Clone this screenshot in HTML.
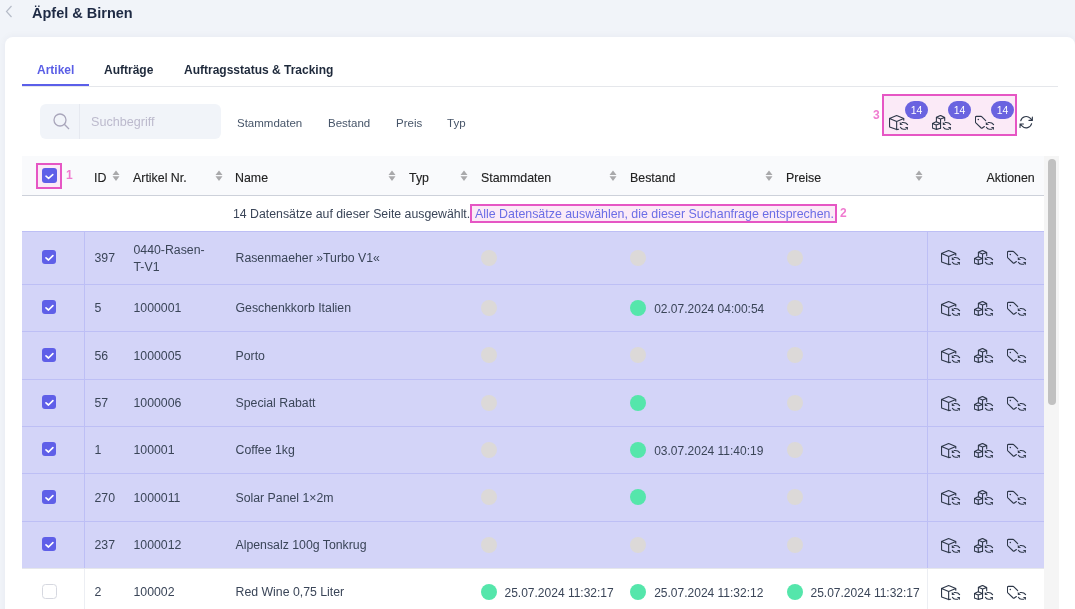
<!DOCTYPE html>
<html><head><meta charset="utf-8">
<style>
*{box-sizing:border-box;margin:0;padding:0}
html,body{width:1075px;height:609px;overflow:hidden;background:#f1f4f9;font-family:"Liberation Sans",sans-serif;color:#334155}
body{will-change:transform}
.a{position:absolute;white-space:nowrap}
#title{left:32px;top:3.6px;font-size:14.5px;font-weight:700;color:#1e2a44;line-height:18px}
#back{left:5px;top:5px}
#card{position:absolute;left:5px;top:37px;width:1070px;height:600px;background:#fff;border-radius:8px;box-shadow:0 0 8px rgba(30,40,70,0.05)}
.tab{top:63px;font-size:12px;font-weight:700;color:#1e293b;line-height:14px}
#tabline{left:22px;top:86px;width:1036px;height:1px;background:#e5e7eb}
#tabul{left:22px;top:84px;width:67px;height:2px;background:#5b5fe9}
#search{left:40px;top:104px;width:181px;height:35px;background:#f1f4f9;border-radius:6px}
#search .div{position:absolute;left:39px;top:0;width:1px;height:35px;background:#e6e9f0}
#search .ph{position:absolute;left:51px;top:11px;font-size:12.6px;color:#bcbacd;line-height:14px}
.flt{top:116px;font-size:11.5px;color:#475569;line-height:14px}
.pink{position:absolute;border:2px solid #e656c4;background:#fbeaf7}
.plab{position:absolute;font-size:12px;font-weight:700;color:#f07bd0;line-height:12px}
.badge{position:absolute;width:23px;height:18px;border-radius:9px;background:#6a63e0;color:#fff;font-size:10.5px;line-height:18px;text-align:center}
#thead{left:22px;top:156px;width:1022px;height:40px;background:#f9fafc;border-bottom:1px solid #cdd1da}
.th{top:171px;font-size:12.4px;color:#222;line-height:14px;-webkit-text-stroke:0.12px #222}
.sort{position:absolute;top:170px}
#info{left:22px;top:196px;width:1022px;height:35px;background:#fff}
.row{position:absolute;left:22px;width:1022px;background:#d3d4f8;border-top:1px solid #bdbff5}
.row.w{background:#fff;border-top-color:#e5e7eb}
.vb{position:absolute;top:0;bottom:0;width:1px;background:#bdbff5}
.row.w .vb{background:#eceef3}
.td{position:absolute;font-size:12.3px;color:#3a4558;line-height:17px}
.cb{position:absolute;left:20px;width:14.4px;height:14.4px;border-radius:3px;background:#5f5fe8}
.cb.off{background:#fff;border:1px solid #d6d8e0;width:14.7px;height:15.4px;margin-top:-0.5px;border-radius:3.5px}
.dot{position:absolute;width:16px;height:16px;border-radius:8px;background:#dcd9d8}
.dot.g{background:#55e6ab}
.ico{position:absolute}
.dt{font-size:12px;margin-top:0.8px}
#sb{left:1044px;top:156px;width:15px;height:460px;background:#f5f5f5}
#thumb{left:1048px;top:159px;width:8px;height:246px;border-radius:4px;background:#c1c1c1}
</style></head><body>
<svg class="a" id="back" width="8" height="13" viewBox="0 0 8 13"><path d="M6.5 1 L1.5 6.5 L6.5 12" fill="none" stroke="#b6bcc8" stroke-width="1.2"/></svg>
<div class="a" id="title">Äpfel &amp; Birnen</div>
<div id="card"></div>
<div class="a tab" style="left:37px;color:#5a5ee6">Artikel</div>
<div class="a tab" style="left:104px">Aufträge</div>
<div class="a tab" style="left:184px">Auftragsstatus &amp; Tracking</div>
<div class="a" id="tabline"></div>
<div class="a" id="tabul"></div>

<div class="a" id="search"><div class="div"></div>
<svg style="position:absolute;left:12px;top:8px" width="19" height="19" viewBox="0 0 19 19"><circle cx="8" cy="8" r="6" fill="none" stroke="#a9a6bb" stroke-width="1.3"/><path d="M12.3 12.3 L17 17" stroke="#a9a6bb" stroke-width="1.3"/></svg>
<div class="ph">Suchbegriff</div></div>
<div class="a flt" style="left:237px">Stammdaten</div>
<div class="a flt" style="left:328px">Bestand</div>
<div class="a flt" style="left:396px">Preis</div>
<div class="a flt" style="left:447px">Typ</div>

<div class="pink" style="left:882px;top:94px;width:135px;height:42px"></div>
<div class="plab" style="left:873px;top:109px">3</div>
<div class="badge" style="left:905px;top:101px">14</div>
<div class="badge" style="left:948px;top:101px">14</div>
<div class="badge" style="left:991px;top:101px">14</div>
<svg class="ico a" style="left:889px;top:114.7px" width="21" height="17" viewBox="0 0 21 17"><g fill="none" stroke="#2d3748" stroke-width="1.1" stroke-linejoin="round" stroke-linecap="round"><path d="M7.65 0.5 L0.5 3.4 L0.6 11.9 L7.65 14.6 L7.65 6.5 L0.5 3.4 M7.65 0.5 L14.8 3.5 L7.65 6.5 M14.8 3.5 L14.8 5.3 M7.65 14.6 L9.6 14.2"/></g><path d="M13 7.5 C15.5 7.2 17.4 7.8 18.6 9.6 M11.4 12.3 C12.2 13.8 13 14.3 14.6 14.3 L16.8 14.3" fill="none" stroke="#2d3748" stroke-width="1.1" stroke-linecap="round"/><path d="M10.8 6.9 L10.8 10 L14 9.7 Z M15.9 12.1 L18.9 12.1 L18.9 15.1 Z" fill="#2d3748"/></svg><svg class="ico a" style="left:931.7px;top:114.7px" width="21" height="17" viewBox="0 0 21 17"><g fill="none" stroke="#2d3748" stroke-width="1.1" stroke-linejoin="round" stroke-linecap="round"><path d="M8.55 0.4 L4.4 2.3 L4.4 6.8 M8.55 0.4 L12.7 2.5 L12.7 5.8 M4.4 2.3 L8.55 4.1 L12.7 2.5 M8.55 4.1 L8.55 13.3"/><path d="M4.2 6.8 L0.4 8.45 L0.4 13 L4.55 14.4 L8.55 13.3 M0.4 8.45 L4.2 9.9 L8.55 8.45 L4.2 6.8 M4.2 9.9 L4.4 14.4"/></g><path d="M13 7.5 C15.5 7.2 17.4 7.8 18.6 9.6 M11.4 12.3 C12.2 13.8 13 14.3 14.6 14.3 L16.8 14.3" fill="none" stroke="#2d3748" stroke-width="1.1" stroke-linecap="round"/><path d="M10.8 6.9 L10.8 10 L14 9.7 Z M15.9 12.1 L18.9 12.1 L18.9 15.1 Z" fill="#2d3748"/></svg><svg class="ico a" style="left:975.3px;top:114.7px" width="21" height="17" viewBox="0 0 21 17"><g fill="none" stroke="#2d3748" stroke-width="1.1" stroke-linejoin="round" stroke-linecap="round"><path d="M10.7 5.6 L6.9 1.8 Q6.5 1.4 6 1.4 L1.4 1.4 Q0.45 1.4 0.45 2.4 L0.45 7 Q0.45 7.5 0.85 7.9 L6.2 13 Q6.75 13.5 7.3 13 L9.4 11.5"/></g><circle cx="3.3" cy="4.5" r="0.75" fill="#2d3748"/><path d="M13 7.5 C15.5 7.2 17.4 7.8 18.6 9.6 M11.4 12.3 C12.2 13.8 13 14.3 14.6 14.3 L16.8 14.3" fill="none" stroke="#2d3748" stroke-width="1.1" stroke-linecap="round"/><path d="M10.8 6.9 L10.8 10 L14 9.7 Z M15.9 12.1 L18.9 12.1 L18.9 15.1 Z" fill="#2d3748"/></svg>
<svg class="a" style="left:1017.9px;top:114.4px" width="16.4" height="16.4" viewBox="0 0 24 24"><path d="M16.023 9.348h4.992v-.001M2.985 19.644v-4.992m0 0h4.992m-4.993 0 3.181 3.183a8.25 8.25 0 0 0 13.803-3.7M4.031 9.865a8.25 8.25 0 0 1 13.803-3.7l3.181 3.182m0-4.991v4.99" fill="none" stroke="#2d3748" stroke-width="1.6" stroke-linecap="round" stroke-linejoin="round"/></svg>

<div class="a" id="thead"></div>
<div class="pink" style="left:36px;top:163px;width:26px;height:26px"></div>
<div class="cb" style="left:42px;top:168.4px;width:14.7px;height:14.7px"><svg width="15" height="15" viewBox="0 0 15 15" style="position:absolute;left:0;top:0"><path d="M4 8.2 L6.6 10.3 L10.8 6.6" fill="none" stroke="#fff" stroke-width="1.6" stroke-linecap="round" stroke-linejoin="round"/></svg></div>
<div class="plab" style="left:66px;top:169px">1</div>
<div class="a th" style="left:94px">ID</div>
<div class="a th" style="left:133px">Artikel Nr.</div>
<div class="a th" style="left:235px">Name</div>
<div class="a th" style="left:409px">Typ</div>
<div class="a th" style="left:481px">Stammdaten</div>
<div class="a th" style="left:630px">Bestand</div>
<div class="a th" style="left:786px">Preise</div>
<div class="a th" style="left:986.5px">Aktionen</div>

<svg class="sort" style="left:112px" width="8" height="12" viewBox="0 0 8 12"><path d="M0.5 5 L4 0.4 L7.5 5 Z M0.5 6.2 L4 10.9 L7.5 6.2 Z" fill="#a9a9ab"/></svg>
<svg class="sort" style="left:214.5px" width="8" height="12" viewBox="0 0 8 12"><path d="M0.5 5 L4 0.4 L7.5 5 Z M0.5 6.2 L4 10.9 L7.5 6.2 Z" fill="#a9a9ab"/></svg>
<svg class="sort" style="left:388px" width="8" height="12" viewBox="0 0 8 12"><path d="M0.5 5 L4 0.4 L7.5 5 Z M0.5 6.2 L4 10.9 L7.5 6.2 Z" fill="#a9a9ab"/></svg>
<svg class="sort" style="left:460px" width="8" height="12" viewBox="0 0 8 12"><path d="M0.5 5 L4 0.4 L7.5 5 Z M0.5 6.2 L4 10.9 L7.5 6.2 Z" fill="#a9a9ab"/></svg>
<svg class="sort" style="left:609px" width="8" height="12" viewBox="0 0 8 12"><path d="M0.5 5 L4 0.4 L7.5 5 Z M0.5 6.2 L4 10.9 L7.5 6.2 Z" fill="#a9a9ab"/></svg>
<svg class="sort" style="left:765px" width="8" height="12" viewBox="0 0 8 12"><path d="M0.5 5 L4 0.4 L7.5 5 Z M0.5 6.2 L4 10.9 L7.5 6.2 Z" fill="#a9a9ab"/></svg>
<svg class="sort" style="left:915px" width="8" height="12" viewBox="0 0 8 12"><path d="M0.5 5 L4 0.4 L7.5 5 Z M0.5 6.2 L4 10.9 L7.5 6.2 Z" fill="#a9a9ab"/></svg>
<div class="a" id="info"></div>
<div class="a td" style="left:233px;top:206px">14 Datensätze auf dieser Seite ausgewählt.</div>
<div class="pink" style="left:470px;top:204px;width:367px;height:19px"></div>
<div class="a td" style="left:475px;top:206px;color:#6b6de6;font-size:12.4px">Alle Datensätze auswählen, die dieser Suchanfrage entsprechen.</div>
<div class="plab" style="left:840px;top:207px">2</div>

<div class="row" style="top:231px;height:53px"><div class="vb" style="left:62px"></div><div class="vb" style="left:905px"></div><div class="cb" style="left:20px;top:18.1px"><svg width="15" height="15" viewBox="0 0 15 15" style="position:absolute;left:0;top:0"><path d="M4 7.9 L6.5 10 L10.9 5.7" fill="none" stroke="#fff" stroke-width="1.7" stroke-linecap="round" stroke-linejoin="round"/></svg></div><div class="td" style="left:72.5px;top:18.3px">397</div><div class="td" style="left:111.5px;top:9.8px">0440-Rasen-<br>T-V1</div><div class="td" style="left:213.5px;top:18.3px">Rasenmaeher »Turbo V1«</div><div class="dot" style="left:458.5px;top:17.5px"></div><div class="dot" style="left:608.2px;top:17.5px"></div><div class="dot" style="left:764.5px;top:17.5px"></div><svg class="ico" style="left:919px;top:17.8px" width="21" height="17" viewBox="0 0 21 17"><g fill="none" stroke="#2d3748" stroke-width="1.1" stroke-linejoin="round" stroke-linecap="round"><path d="M7.65 0.5 L0.5 3.4 L0.6 11.9 L7.65 14.6 L7.65 6.5 L0.5 3.4 M7.65 0.5 L14.8 3.5 L7.65 6.5 M14.8 3.5 L14.8 5.3 M7.65 14.6 L9.6 14.2"/></g><path d="M13 7.5 C15.5 7.2 17.4 7.8 18.6 9.6 M11.4 12.3 C12.2 13.8 13 14.3 14.6 14.3 L16.8 14.3" fill="none" stroke="#2d3748" stroke-width="1.1" stroke-linecap="round"/><path d="M10.8 6.9 L10.8 10 L14 9.7 Z M15.9 12.1 L18.9 12.1 L18.9 15.1 Z" fill="#2d3748"/></svg><svg class="ico" style="left:952px;top:17.8px" width="21" height="17" viewBox="0 0 21 17"><g fill="none" stroke="#2d3748" stroke-width="1.1" stroke-linejoin="round" stroke-linecap="round"><path d="M8.55 0.4 L4.4 2.3 L4.4 6.8 M8.55 0.4 L12.7 2.5 L12.7 5.8 M4.4 2.3 L8.55 4.1 L12.7 2.5 M8.55 4.1 L8.55 13.3"/><path d="M4.2 6.8 L0.4 8.45 L0.4 13 L4.55 14.4 L8.55 13.3 M0.4 8.45 L4.2 9.9 L8.55 8.45 L4.2 6.8 M4.2 9.9 L4.4 14.4"/></g><path d="M13 7.5 C15.5 7.2 17.4 7.8 18.6 9.6 M11.4 12.3 C12.2 13.8 13 14.3 14.6 14.3 L16.8 14.3" fill="none" stroke="#2d3748" stroke-width="1.1" stroke-linecap="round"/><path d="M10.8 6.9 L10.8 10 L14 9.7 Z M15.9 12.1 L18.9 12.1 L18.9 15.1 Z" fill="#2d3748"/></svg><svg class="ico" style="left:985px;top:17.8px" width="21" height="17" viewBox="0 0 21 17"><g fill="none" stroke="#2d3748" stroke-width="1.1" stroke-linejoin="round" stroke-linecap="round"><path d="M10.7 5.6 L6.9 1.8 Q6.5 1.4 6 1.4 L1.4 1.4 Q0.45 1.4 0.45 2.4 L0.45 7 Q0.45 7.5 0.85 7.9 L6.2 13 Q6.75 13.5 7.3 13 L9.4 11.5"/></g><circle cx="3.3" cy="4.5" r="0.75" fill="#2d3748"/><path d="M13 7.5 C15.5 7.2 17.4 7.8 18.6 9.6 M11.4 12.3 C12.2 13.8 13 14.3 14.6 14.3 L16.8 14.3" fill="none" stroke="#2d3748" stroke-width="1.1" stroke-linecap="round"/><path d="M10.8 6.9 L10.8 10 L14 9.7 Z M15.9 12.1 L18.9 12.1 L18.9 15.1 Z" fill="#2d3748"/></svg></div>
<div class="row" style="top:284px;height:47px"><div class="vb" style="left:62px"></div><div class="vb" style="left:905px"></div><div class="cb" style="left:20px;top:15.1px"><svg width="15" height="15" viewBox="0 0 15 15" style="position:absolute;left:0;top:0"><path d="M4 7.9 L6.5 10 L10.9 5.7" fill="none" stroke="#fff" stroke-width="1.7" stroke-linecap="round" stroke-linejoin="round"/></svg></div><div class="td" style="left:72.5px;top:15.3px">5</div><div class="td" style="left:111.5px;top:15.3px">1000001</div><div class="td" style="left:213.5px;top:15.3px">Geschenkkorb Italien</div><div class="dot" style="left:458.5px;top:14.5px"></div><div class="dot g" style="left:608.2px;top:14.5px"></div><div class="td dt" style="left:632.2px;top:15.3px">02.07.2024 04:00:54</div><div class="dot" style="left:764.5px;top:14.5px"></div><svg class="ico" style="left:919px;top:15.5px" width="21" height="17" viewBox="0 0 21 17"><g fill="none" stroke="#2d3748" stroke-width="1.1" stroke-linejoin="round" stroke-linecap="round"><path d="M7.65 0.5 L0.5 3.4 L0.6 11.9 L7.65 14.6 L7.65 6.5 L0.5 3.4 M7.65 0.5 L14.8 3.5 L7.65 6.5 M14.8 3.5 L14.8 5.3 M7.65 14.6 L9.6 14.2"/></g><path d="M13 7.5 C15.5 7.2 17.4 7.8 18.6 9.6 M11.4 12.3 C12.2 13.8 13 14.3 14.6 14.3 L16.8 14.3" fill="none" stroke="#2d3748" stroke-width="1.1" stroke-linecap="round"/><path d="M10.8 6.9 L10.8 10 L14 9.7 Z M15.9 12.1 L18.9 12.1 L18.9 15.1 Z" fill="#2d3748"/></svg><svg class="ico" style="left:952px;top:15.5px" width="21" height="17" viewBox="0 0 21 17"><g fill="none" stroke="#2d3748" stroke-width="1.1" stroke-linejoin="round" stroke-linecap="round"><path d="M8.55 0.4 L4.4 2.3 L4.4 6.8 M8.55 0.4 L12.7 2.5 L12.7 5.8 M4.4 2.3 L8.55 4.1 L12.7 2.5 M8.55 4.1 L8.55 13.3"/><path d="M4.2 6.8 L0.4 8.45 L0.4 13 L4.55 14.4 L8.55 13.3 M0.4 8.45 L4.2 9.9 L8.55 8.45 L4.2 6.8 M4.2 9.9 L4.4 14.4"/></g><path d="M13 7.5 C15.5 7.2 17.4 7.8 18.6 9.6 M11.4 12.3 C12.2 13.8 13 14.3 14.6 14.3 L16.8 14.3" fill="none" stroke="#2d3748" stroke-width="1.1" stroke-linecap="round"/><path d="M10.8 6.9 L10.8 10 L14 9.7 Z M15.9 12.1 L18.9 12.1 L18.9 15.1 Z" fill="#2d3748"/></svg><svg class="ico" style="left:985px;top:15.5px" width="21" height="17" viewBox="0 0 21 17"><g fill="none" stroke="#2d3748" stroke-width="1.1" stroke-linejoin="round" stroke-linecap="round"><path d="M10.7 5.6 L6.9 1.8 Q6.5 1.4 6 1.4 L1.4 1.4 Q0.45 1.4 0.45 2.4 L0.45 7 Q0.45 7.5 0.85 7.9 L6.2 13 Q6.75 13.5 7.3 13 L9.4 11.5"/></g><circle cx="3.3" cy="4.5" r="0.75" fill="#2d3748"/><path d="M13 7.5 C15.5 7.2 17.4 7.8 18.6 9.6 M11.4 12.3 C12.2 13.8 13 14.3 14.6 14.3 L16.8 14.3" fill="none" stroke="#2d3748" stroke-width="1.1" stroke-linecap="round"/><path d="M10.8 6.9 L10.8 10 L14 9.7 Z M15.9 12.1 L18.9 12.1 L18.9 15.1 Z" fill="#2d3748"/></svg></div>
<div class="row" style="top:331px;height:48px"><div class="vb" style="left:62px"></div><div class="vb" style="left:905px"></div><div class="cb" style="left:20px;top:15.6px"><svg width="15" height="15" viewBox="0 0 15 15" style="position:absolute;left:0;top:0"><path d="M4 7.9 L6.5 10 L10.9 5.7" fill="none" stroke="#fff" stroke-width="1.7" stroke-linecap="round" stroke-linejoin="round"/></svg></div><div class="td" style="left:72.5px;top:15.8px">56</div><div class="td" style="left:111.5px;top:15.8px">1000005</div><div class="td" style="left:213.5px;top:15.8px">Porto</div><div class="dot" style="left:458.5px;top:15.0px"></div><div class="dot" style="left:608.2px;top:15.0px"></div><div class="dot" style="left:764.5px;top:15.0px"></div><svg class="ico" style="left:919px;top:16.0px" width="21" height="17" viewBox="0 0 21 17"><g fill="none" stroke="#2d3748" stroke-width="1.1" stroke-linejoin="round" stroke-linecap="round"><path d="M7.65 0.5 L0.5 3.4 L0.6 11.9 L7.65 14.6 L7.65 6.5 L0.5 3.4 M7.65 0.5 L14.8 3.5 L7.65 6.5 M14.8 3.5 L14.8 5.3 M7.65 14.6 L9.6 14.2"/></g><path d="M13 7.5 C15.5 7.2 17.4 7.8 18.6 9.6 M11.4 12.3 C12.2 13.8 13 14.3 14.6 14.3 L16.8 14.3" fill="none" stroke="#2d3748" stroke-width="1.1" stroke-linecap="round"/><path d="M10.8 6.9 L10.8 10 L14 9.7 Z M15.9 12.1 L18.9 12.1 L18.9 15.1 Z" fill="#2d3748"/></svg><svg class="ico" style="left:952px;top:16.0px" width="21" height="17" viewBox="0 0 21 17"><g fill="none" stroke="#2d3748" stroke-width="1.1" stroke-linejoin="round" stroke-linecap="round"><path d="M8.55 0.4 L4.4 2.3 L4.4 6.8 M8.55 0.4 L12.7 2.5 L12.7 5.8 M4.4 2.3 L8.55 4.1 L12.7 2.5 M8.55 4.1 L8.55 13.3"/><path d="M4.2 6.8 L0.4 8.45 L0.4 13 L4.55 14.4 L8.55 13.3 M0.4 8.45 L4.2 9.9 L8.55 8.45 L4.2 6.8 M4.2 9.9 L4.4 14.4"/></g><path d="M13 7.5 C15.5 7.2 17.4 7.8 18.6 9.6 M11.4 12.3 C12.2 13.8 13 14.3 14.6 14.3 L16.8 14.3" fill="none" stroke="#2d3748" stroke-width="1.1" stroke-linecap="round"/><path d="M10.8 6.9 L10.8 10 L14 9.7 Z M15.9 12.1 L18.9 12.1 L18.9 15.1 Z" fill="#2d3748"/></svg><svg class="ico" style="left:985px;top:16.0px" width="21" height="17" viewBox="0 0 21 17"><g fill="none" stroke="#2d3748" stroke-width="1.1" stroke-linejoin="round" stroke-linecap="round"><path d="M10.7 5.6 L6.9 1.8 Q6.5 1.4 6 1.4 L1.4 1.4 Q0.45 1.4 0.45 2.4 L0.45 7 Q0.45 7.5 0.85 7.9 L6.2 13 Q6.75 13.5 7.3 13 L9.4 11.5"/></g><circle cx="3.3" cy="4.5" r="0.75" fill="#2d3748"/><path d="M13 7.5 C15.5 7.2 17.4 7.8 18.6 9.6 M11.4 12.3 C12.2 13.8 13 14.3 14.6 14.3 L16.8 14.3" fill="none" stroke="#2d3748" stroke-width="1.1" stroke-linecap="round"/><path d="M10.8 6.9 L10.8 10 L14 9.7 Z M15.9 12.1 L18.9 12.1 L18.9 15.1 Z" fill="#2d3748"/></svg></div>
<div class="row" style="top:379px;height:47px"><div class="vb" style="left:62px"></div><div class="vb" style="left:905px"></div><div class="cb" style="left:20px;top:15.1px"><svg width="15" height="15" viewBox="0 0 15 15" style="position:absolute;left:0;top:0"><path d="M4 7.9 L6.5 10 L10.9 5.7" fill="none" stroke="#fff" stroke-width="1.7" stroke-linecap="round" stroke-linejoin="round"/></svg></div><div class="td" style="left:72.5px;top:15.3px">57</div><div class="td" style="left:111.5px;top:15.3px">1000006</div><div class="td" style="left:213.5px;top:15.3px">Special Rabatt</div><div class="dot" style="left:458.5px;top:14.5px"></div><div class="dot g" style="left:608.2px;top:14.5px"></div><div class="dot" style="left:764.5px;top:14.5px"></div><svg class="ico" style="left:919px;top:15.5px" width="21" height="17" viewBox="0 0 21 17"><g fill="none" stroke="#2d3748" stroke-width="1.1" stroke-linejoin="round" stroke-linecap="round"><path d="M7.65 0.5 L0.5 3.4 L0.6 11.9 L7.65 14.6 L7.65 6.5 L0.5 3.4 M7.65 0.5 L14.8 3.5 L7.65 6.5 M14.8 3.5 L14.8 5.3 M7.65 14.6 L9.6 14.2"/></g><path d="M13 7.5 C15.5 7.2 17.4 7.8 18.6 9.6 M11.4 12.3 C12.2 13.8 13 14.3 14.6 14.3 L16.8 14.3" fill="none" stroke="#2d3748" stroke-width="1.1" stroke-linecap="round"/><path d="M10.8 6.9 L10.8 10 L14 9.7 Z M15.9 12.1 L18.9 12.1 L18.9 15.1 Z" fill="#2d3748"/></svg><svg class="ico" style="left:952px;top:15.5px" width="21" height="17" viewBox="0 0 21 17"><g fill="none" stroke="#2d3748" stroke-width="1.1" stroke-linejoin="round" stroke-linecap="round"><path d="M8.55 0.4 L4.4 2.3 L4.4 6.8 M8.55 0.4 L12.7 2.5 L12.7 5.8 M4.4 2.3 L8.55 4.1 L12.7 2.5 M8.55 4.1 L8.55 13.3"/><path d="M4.2 6.8 L0.4 8.45 L0.4 13 L4.55 14.4 L8.55 13.3 M0.4 8.45 L4.2 9.9 L8.55 8.45 L4.2 6.8 M4.2 9.9 L4.4 14.4"/></g><path d="M13 7.5 C15.5 7.2 17.4 7.8 18.6 9.6 M11.4 12.3 C12.2 13.8 13 14.3 14.6 14.3 L16.8 14.3" fill="none" stroke="#2d3748" stroke-width="1.1" stroke-linecap="round"/><path d="M10.8 6.9 L10.8 10 L14 9.7 Z M15.9 12.1 L18.9 12.1 L18.9 15.1 Z" fill="#2d3748"/></svg><svg class="ico" style="left:985px;top:15.5px" width="21" height="17" viewBox="0 0 21 17"><g fill="none" stroke="#2d3748" stroke-width="1.1" stroke-linejoin="round" stroke-linecap="round"><path d="M10.7 5.6 L6.9 1.8 Q6.5 1.4 6 1.4 L1.4 1.4 Q0.45 1.4 0.45 2.4 L0.45 7 Q0.45 7.5 0.85 7.9 L6.2 13 Q6.75 13.5 7.3 13 L9.4 11.5"/></g><circle cx="3.3" cy="4.5" r="0.75" fill="#2d3748"/><path d="M13 7.5 C15.5 7.2 17.4 7.8 18.6 9.6 M11.4 12.3 C12.2 13.8 13 14.3 14.6 14.3 L16.8 14.3" fill="none" stroke="#2d3748" stroke-width="1.1" stroke-linecap="round"/><path d="M10.8 6.9 L10.8 10 L14 9.7 Z M15.9 12.1 L18.9 12.1 L18.9 15.1 Z" fill="#2d3748"/></svg></div>
<div class="row" style="top:426px;height:47px"><div class="vb" style="left:62px"></div><div class="vb" style="left:905px"></div><div class="cb" style="left:20px;top:15.1px"><svg width="15" height="15" viewBox="0 0 15 15" style="position:absolute;left:0;top:0"><path d="M4 7.9 L6.5 10 L10.9 5.7" fill="none" stroke="#fff" stroke-width="1.7" stroke-linecap="round" stroke-linejoin="round"/></svg></div><div class="td" style="left:72.5px;top:15.3px">1</div><div class="td" style="left:111.5px;top:15.3px">100001</div><div class="td" style="left:213.5px;top:15.3px">Coffee 1kg</div><div class="dot" style="left:458.5px;top:14.5px"></div><div class="dot g" style="left:608.2px;top:14.5px"></div><div class="td dt" style="left:632.2px;top:15.3px">03.07.2024 11:40:19</div><div class="dot" style="left:764.5px;top:14.5px"></div><svg class="ico" style="left:919px;top:15.5px" width="21" height="17" viewBox="0 0 21 17"><g fill="none" stroke="#2d3748" stroke-width="1.1" stroke-linejoin="round" stroke-linecap="round"><path d="M7.65 0.5 L0.5 3.4 L0.6 11.9 L7.65 14.6 L7.65 6.5 L0.5 3.4 M7.65 0.5 L14.8 3.5 L7.65 6.5 M14.8 3.5 L14.8 5.3 M7.65 14.6 L9.6 14.2"/></g><path d="M13 7.5 C15.5 7.2 17.4 7.8 18.6 9.6 M11.4 12.3 C12.2 13.8 13 14.3 14.6 14.3 L16.8 14.3" fill="none" stroke="#2d3748" stroke-width="1.1" stroke-linecap="round"/><path d="M10.8 6.9 L10.8 10 L14 9.7 Z M15.9 12.1 L18.9 12.1 L18.9 15.1 Z" fill="#2d3748"/></svg><svg class="ico" style="left:952px;top:15.5px" width="21" height="17" viewBox="0 0 21 17"><g fill="none" stroke="#2d3748" stroke-width="1.1" stroke-linejoin="round" stroke-linecap="round"><path d="M8.55 0.4 L4.4 2.3 L4.4 6.8 M8.55 0.4 L12.7 2.5 L12.7 5.8 M4.4 2.3 L8.55 4.1 L12.7 2.5 M8.55 4.1 L8.55 13.3"/><path d="M4.2 6.8 L0.4 8.45 L0.4 13 L4.55 14.4 L8.55 13.3 M0.4 8.45 L4.2 9.9 L8.55 8.45 L4.2 6.8 M4.2 9.9 L4.4 14.4"/></g><path d="M13 7.5 C15.5 7.2 17.4 7.8 18.6 9.6 M11.4 12.3 C12.2 13.8 13 14.3 14.6 14.3 L16.8 14.3" fill="none" stroke="#2d3748" stroke-width="1.1" stroke-linecap="round"/><path d="M10.8 6.9 L10.8 10 L14 9.7 Z M15.9 12.1 L18.9 12.1 L18.9 15.1 Z" fill="#2d3748"/></svg><svg class="ico" style="left:985px;top:15.5px" width="21" height="17" viewBox="0 0 21 17"><g fill="none" stroke="#2d3748" stroke-width="1.1" stroke-linejoin="round" stroke-linecap="round"><path d="M10.7 5.6 L6.9 1.8 Q6.5 1.4 6 1.4 L1.4 1.4 Q0.45 1.4 0.45 2.4 L0.45 7 Q0.45 7.5 0.85 7.9 L6.2 13 Q6.75 13.5 7.3 13 L9.4 11.5"/></g><circle cx="3.3" cy="4.5" r="0.75" fill="#2d3748"/><path d="M13 7.5 C15.5 7.2 17.4 7.8 18.6 9.6 M11.4 12.3 C12.2 13.8 13 14.3 14.6 14.3 L16.8 14.3" fill="none" stroke="#2d3748" stroke-width="1.1" stroke-linecap="round"/><path d="M10.8 6.9 L10.8 10 L14 9.7 Z M15.9 12.1 L18.9 12.1 L18.9 15.1 Z" fill="#2d3748"/></svg></div>
<div class="row" style="top:473px;height:48px"><div class="vb" style="left:62px"></div><div class="vb" style="left:905px"></div><div class="cb" style="left:20px;top:15.6px"><svg width="15" height="15" viewBox="0 0 15 15" style="position:absolute;left:0;top:0"><path d="M4 7.9 L6.5 10 L10.9 5.7" fill="none" stroke="#fff" stroke-width="1.7" stroke-linecap="round" stroke-linejoin="round"/></svg></div><div class="td" style="left:72.5px;top:15.8px">270</div><div class="td" style="left:111.5px;top:15.8px">1000011</div><div class="td" style="left:213.5px;top:15.8px">Solar Panel 1×2m</div><div class="dot" style="left:458.5px;top:15.0px"></div><div class="dot g" style="left:608.2px;top:15.0px"></div><div class="dot" style="left:764.5px;top:15.0px"></div><svg class="ico" style="left:919px;top:16.0px" width="21" height="17" viewBox="0 0 21 17"><g fill="none" stroke="#2d3748" stroke-width="1.1" stroke-linejoin="round" stroke-linecap="round"><path d="M7.65 0.5 L0.5 3.4 L0.6 11.9 L7.65 14.6 L7.65 6.5 L0.5 3.4 M7.65 0.5 L14.8 3.5 L7.65 6.5 M14.8 3.5 L14.8 5.3 M7.65 14.6 L9.6 14.2"/></g><path d="M13 7.5 C15.5 7.2 17.4 7.8 18.6 9.6 M11.4 12.3 C12.2 13.8 13 14.3 14.6 14.3 L16.8 14.3" fill="none" stroke="#2d3748" stroke-width="1.1" stroke-linecap="round"/><path d="M10.8 6.9 L10.8 10 L14 9.7 Z M15.9 12.1 L18.9 12.1 L18.9 15.1 Z" fill="#2d3748"/></svg><svg class="ico" style="left:952px;top:16.0px" width="21" height="17" viewBox="0 0 21 17"><g fill="none" stroke="#2d3748" stroke-width="1.1" stroke-linejoin="round" stroke-linecap="round"><path d="M8.55 0.4 L4.4 2.3 L4.4 6.8 M8.55 0.4 L12.7 2.5 L12.7 5.8 M4.4 2.3 L8.55 4.1 L12.7 2.5 M8.55 4.1 L8.55 13.3"/><path d="M4.2 6.8 L0.4 8.45 L0.4 13 L4.55 14.4 L8.55 13.3 M0.4 8.45 L4.2 9.9 L8.55 8.45 L4.2 6.8 M4.2 9.9 L4.4 14.4"/></g><path d="M13 7.5 C15.5 7.2 17.4 7.8 18.6 9.6 M11.4 12.3 C12.2 13.8 13 14.3 14.6 14.3 L16.8 14.3" fill="none" stroke="#2d3748" stroke-width="1.1" stroke-linecap="round"/><path d="M10.8 6.9 L10.8 10 L14 9.7 Z M15.9 12.1 L18.9 12.1 L18.9 15.1 Z" fill="#2d3748"/></svg><svg class="ico" style="left:985px;top:16.0px" width="21" height="17" viewBox="0 0 21 17"><g fill="none" stroke="#2d3748" stroke-width="1.1" stroke-linejoin="round" stroke-linecap="round"><path d="M10.7 5.6 L6.9 1.8 Q6.5 1.4 6 1.4 L1.4 1.4 Q0.45 1.4 0.45 2.4 L0.45 7 Q0.45 7.5 0.85 7.9 L6.2 13 Q6.75 13.5 7.3 13 L9.4 11.5"/></g><circle cx="3.3" cy="4.5" r="0.75" fill="#2d3748"/><path d="M13 7.5 C15.5 7.2 17.4 7.8 18.6 9.6 M11.4 12.3 C12.2 13.8 13 14.3 14.6 14.3 L16.8 14.3" fill="none" stroke="#2d3748" stroke-width="1.1" stroke-linecap="round"/><path d="M10.8 6.9 L10.8 10 L14 9.7 Z M15.9 12.1 L18.9 12.1 L18.9 15.1 Z" fill="#2d3748"/></svg></div>
<div class="row" style="top:521px;height:47px"><div class="vb" style="left:62px"></div><div class="vb" style="left:905px"></div><div class="cb" style="left:20px;top:15.1px"><svg width="15" height="15" viewBox="0 0 15 15" style="position:absolute;left:0;top:0"><path d="M4 7.9 L6.5 10 L10.9 5.7" fill="none" stroke="#fff" stroke-width="1.7" stroke-linecap="round" stroke-linejoin="round"/></svg></div><div class="td" style="left:72.5px;top:15.3px">237</div><div class="td" style="left:111.5px;top:15.3px">1000012</div><div class="td" style="left:213.5px;top:15.3px">Alpensalz 100g Tonkrug</div><div class="dot" style="left:458.5px;top:14.5px"></div><div class="dot" style="left:608.2px;top:14.5px"></div><div class="dot" style="left:764.5px;top:14.5px"></div><svg class="ico" style="left:919px;top:15.5px" width="21" height="17" viewBox="0 0 21 17"><g fill="none" stroke="#2d3748" stroke-width="1.1" stroke-linejoin="round" stroke-linecap="round"><path d="M7.65 0.5 L0.5 3.4 L0.6 11.9 L7.65 14.6 L7.65 6.5 L0.5 3.4 M7.65 0.5 L14.8 3.5 L7.65 6.5 M14.8 3.5 L14.8 5.3 M7.65 14.6 L9.6 14.2"/></g><path d="M13 7.5 C15.5 7.2 17.4 7.8 18.6 9.6 M11.4 12.3 C12.2 13.8 13 14.3 14.6 14.3 L16.8 14.3" fill="none" stroke="#2d3748" stroke-width="1.1" stroke-linecap="round"/><path d="M10.8 6.9 L10.8 10 L14 9.7 Z M15.9 12.1 L18.9 12.1 L18.9 15.1 Z" fill="#2d3748"/></svg><svg class="ico" style="left:952px;top:15.5px" width="21" height="17" viewBox="0 0 21 17"><g fill="none" stroke="#2d3748" stroke-width="1.1" stroke-linejoin="round" stroke-linecap="round"><path d="M8.55 0.4 L4.4 2.3 L4.4 6.8 M8.55 0.4 L12.7 2.5 L12.7 5.8 M4.4 2.3 L8.55 4.1 L12.7 2.5 M8.55 4.1 L8.55 13.3"/><path d="M4.2 6.8 L0.4 8.45 L0.4 13 L4.55 14.4 L8.55 13.3 M0.4 8.45 L4.2 9.9 L8.55 8.45 L4.2 6.8 M4.2 9.9 L4.4 14.4"/></g><path d="M13 7.5 C15.5 7.2 17.4 7.8 18.6 9.6 M11.4 12.3 C12.2 13.8 13 14.3 14.6 14.3 L16.8 14.3" fill="none" stroke="#2d3748" stroke-width="1.1" stroke-linecap="round"/><path d="M10.8 6.9 L10.8 10 L14 9.7 Z M15.9 12.1 L18.9 12.1 L18.9 15.1 Z" fill="#2d3748"/></svg><svg class="ico" style="left:985px;top:15.5px" width="21" height="17" viewBox="0 0 21 17"><g fill="none" stroke="#2d3748" stroke-width="1.1" stroke-linejoin="round" stroke-linecap="round"><path d="M10.7 5.6 L6.9 1.8 Q6.5 1.4 6 1.4 L1.4 1.4 Q0.45 1.4 0.45 2.4 L0.45 7 Q0.45 7.5 0.85 7.9 L6.2 13 Q6.75 13.5 7.3 13 L9.4 11.5"/></g><circle cx="3.3" cy="4.5" r="0.75" fill="#2d3748"/><path d="M13 7.5 C15.5 7.2 17.4 7.8 18.6 9.6 M11.4 12.3 C12.2 13.8 13 14.3 14.6 14.3 L16.8 14.3" fill="none" stroke="#2d3748" stroke-width="1.1" stroke-linecap="round"/><path d="M10.8 6.9 L10.8 10 L14 9.7 Z M15.9 12.1 L18.9 12.1 L18.9 15.1 Z" fill="#2d3748"/></svg></div>
<div class="row w" style="top:568px;height:47px"><div class="vb" style="left:62px"></div><div class="vb" style="left:905px"></div><div class="cb off" style="left:20px;top:15.1px"></div><div class="td" style="left:72.5px;top:15.3px">2</div><div class="td" style="left:111.5px;top:15.3px">100002</div><div class="td" style="left:213.5px;top:15.3px">Red Wine 0,75 Liter</div><div class="dot g" style="left:458.5px;top:14.5px"></div><div class="td dt" style="left:482.5px;top:15.3px">25.07.2024 11:32:17</div><div class="dot g" style="left:608.2px;top:14.5px"></div><div class="td dt" style="left:632.2px;top:15.3px">25.07.2024 11:32:12</div><div class="dot g" style="left:764.5px;top:14.5px"></div><div class="td dt" style="left:788.5px;top:15.3px">25.07.2024 11:32:17</div><svg class="ico" style="left:919px;top:15.5px" width="21" height="17" viewBox="0 0 21 17"><g fill="none" stroke="#2d3748" stroke-width="1.1" stroke-linejoin="round" stroke-linecap="round"><path d="M7.65 0.5 L0.5 3.4 L0.6 11.9 L7.65 14.6 L7.65 6.5 L0.5 3.4 M7.65 0.5 L14.8 3.5 L7.65 6.5 M14.8 3.5 L14.8 5.3 M7.65 14.6 L9.6 14.2"/></g><path d="M13 7.5 C15.5 7.2 17.4 7.8 18.6 9.6 M11.4 12.3 C12.2 13.8 13 14.3 14.6 14.3 L16.8 14.3" fill="none" stroke="#2d3748" stroke-width="1.1" stroke-linecap="round"/><path d="M10.8 6.9 L10.8 10 L14 9.7 Z M15.9 12.1 L18.9 12.1 L18.9 15.1 Z" fill="#2d3748"/></svg><svg class="ico" style="left:952px;top:15.5px" width="21" height="17" viewBox="0 0 21 17"><g fill="none" stroke="#2d3748" stroke-width="1.1" stroke-linejoin="round" stroke-linecap="round"><path d="M8.55 0.4 L4.4 2.3 L4.4 6.8 M8.55 0.4 L12.7 2.5 L12.7 5.8 M4.4 2.3 L8.55 4.1 L12.7 2.5 M8.55 4.1 L8.55 13.3"/><path d="M4.2 6.8 L0.4 8.45 L0.4 13 L4.55 14.4 L8.55 13.3 M0.4 8.45 L4.2 9.9 L8.55 8.45 L4.2 6.8 M4.2 9.9 L4.4 14.4"/></g><path d="M13 7.5 C15.5 7.2 17.4 7.8 18.6 9.6 M11.4 12.3 C12.2 13.8 13 14.3 14.6 14.3 L16.8 14.3" fill="none" stroke="#2d3748" stroke-width="1.1" stroke-linecap="round"/><path d="M10.8 6.9 L10.8 10 L14 9.7 Z M15.9 12.1 L18.9 12.1 L18.9 15.1 Z" fill="#2d3748"/></svg><svg class="ico" style="left:985px;top:15.5px" width="21" height="17" viewBox="0 0 21 17"><g fill="none" stroke="#2d3748" stroke-width="1.1" stroke-linejoin="round" stroke-linecap="round"><path d="M10.7 5.6 L6.9 1.8 Q6.5 1.4 6 1.4 L1.4 1.4 Q0.45 1.4 0.45 2.4 L0.45 7 Q0.45 7.5 0.85 7.9 L6.2 13 Q6.75 13.5 7.3 13 L9.4 11.5"/></g><circle cx="3.3" cy="4.5" r="0.75" fill="#2d3748"/><path d="M13 7.5 C15.5 7.2 17.4 7.8 18.6 9.6 M11.4 12.3 C12.2 13.8 13 14.3 14.6 14.3 L16.8 14.3" fill="none" stroke="#2d3748" stroke-width="1.1" stroke-linecap="round"/><path d="M10.8 6.9 L10.8 10 L14 9.7 Z M15.9 12.1 L18.9 12.1 L18.9 15.1 Z" fill="#2d3748"/></svg></div>
<div class="a" id="sb"></div>
<div class="a" id="thumb"></div>
</body></html>
